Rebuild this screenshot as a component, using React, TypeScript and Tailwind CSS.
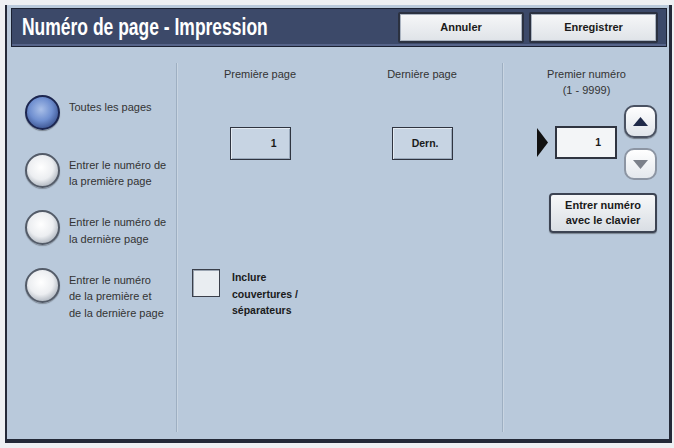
import React from 'react'

const sans = "font-['Liberation_Sans',Arial,sans-serif]"

function Radio({ selected }: { selected?: boolean }) {
    // round button: blue when chosen, pale grey otherwise
    return selected ? (
        <div className="w-[35px] h-[35px] shrink-0 rounded-full border-2 border-[#1c2650] bg-[radial-gradient(circle_at_45%_40%,#a9bfe8_0%,#6f8fd0_45%,#3a528f_80%,#233468_100%)] shadow-[0_1px_1px_rgba(0,0,0,0.35)]" />
    ) : (
        <div className="w-[35px] h-[35px] shrink-0 rounded-full border-2 border-[#535b68] bg-[radial-gradient(circle_at_45%_40%,#ffffff_0%,#eceef1_48%,#bcc2ca_72%,#767e8a_100%)] shadow-[0_1px_1px_rgba(0,0,0,0.3)]" />
    )
}

function HeaderButton({ label, width }: { label: string; width: string }) {
    return (
        <button
            className={`${width} h-[31px] rounded-[2px] border-2 border-[#2b3140] bg-gradient-to-b from-[#f6f7f8] to-[#dfe3e8] shadow-[inset_0_0_0_1px_#aab3c0] text-[11px] font-bold text-[#1a1a1a] ${sans}`}
        >
            {label}
        </button>
    )
}

function OptionRow({ selected, lines }: { selected?: boolean; lines: string[] }) {
    return (
        <div className="flex items-start h-[57.5px]">
            <Radio selected={selected} />
            <div className="ml-[9px] mt-[4px] text-[11px] leading-[16.5px] text-[#333]">
                {lines.map((l) => (
                    <div key={l}>{l}</div>
                ))}
            </div>
        </div>
    )
}

function Divider() {
    return <div className="w-[2px] shrink-0 mt-[16px] mb-[7px] border-l border-[#9eafc2] bg-[#c9d5e2]" />
}

function ValueBox({ value }: { value: string }) {
    return (
        <div className="w-[61px] h-[33px] border border-[#2f3440] bg-[#c7d4e3] shadow-[inset_1px_1px_0_#e4ebf3,inset_-1px_-1px_0_#9aa9bb] flex items-center justify-end pr-[13px] text-[10.5px] font-bold text-[#1a1a1a]">
            {value}
        </div>
    )
}

export default function App() {
    return (
        <div className={`w-[674px] h-[448px] bg-[#eef0f3] pt-[5px] pl-[5px] ${sans}`}>
            <div className="w-[667px] h-[438px] flex flex-col bg-[#b9c9db] border-l-2 border-r-[3px] border-b-[4px] border-[#242938]">
                {/* title bar */}
                <div className="mt-[3px] ml-[4px] mr-[2px] h-[39px] shrink-0 flex items-center bg-[#3c4969] border border-[#1b2132] shadow-[inset_0_-2px_0_#56648a]">
                    <span className="ml-[10px] inline-block origin-left scale-x-[0.76] whitespace-nowrap text-[23px] font-bold text-white font-['Liberation_Sans_Narrow','Liberation_Sans',sans-serif]">
                        Numéro de page - Impression
                    </span>
                    <div className="ml-auto mr-[8px] flex gap-[5px]">
                        <HeaderButton label="Annuler" width="w-[126px]" />
                        <HeaderButton label="Enregistrer" width="w-[129px]" />
                    </div>
                </div>

                {/* body */}
                <div className="flex-1 flex">
                    {/* options */}
                    <div className="w-[169px] shrink-0 pt-[48px] pl-[18px]">
                        <OptionRow selected lines={['Toutes les pages']} />
                        <OptionRow lines={['Entrer le numéro de', 'la première page']} />
                        <OptionRow lines={['Entrer le numéro de', 'la dernière page']} />
                        <OptionRow lines={['Entrer le numéro', 'de la première et', 'de la dernière page']} />
                    </div>

                    <Divider />

                    {/* page range */}
                    <div className="w-[324px] shrink-0 pt-[19px] text-[11px] text-[#333]">
                        <div className="flex">
                            <div className="w-[164px] flex flex-col items-center">
                                <div className="leading-[16px]">Première page</div>
                                <div className="mt-[45px]">
                                    <ValueBox value="1" />
                                </div>
                            </div>
                            <div className="w-[160px] flex flex-col items-center">
                                <div className="leading-[16px]">Dernière page</div>
                                <div className="mt-[45px]">
                                    <ValueBox value="Dern." />
                                </div>
                            </div>
                        </div>
                        <div className="mt-[109px] ml-[14px] flex items-start">
                            <div className="w-[28px] h-[28px] shrink-0 border border-[#3a3f4a] bg-[#e9edf1] shadow-[inset_1px_1px_0_#9aa4b1]" />
                            <div className="ml-[12px] text-[10.5px] leading-[16.5px] font-bold text-[#1a1a1a]">
                                <div>Inclure</div>
                                <div>couvertures /</div>
                                <div>séparateurs</div>
                            </div>
                        </div>
                    </div>

                    <Divider />

                    {/* start number */}
                    <div className="flex-1 pt-[19px] text-[11px] text-[#333]">
                        <div className="text-center leading-[16px]">
                            <div>Premier numéro</div>
                            <div>(1 - 9999)</div>
                        </div>
                        <div className="mt-[7px] pl-[33px] flex items-center">
                            <svg width="11" height="29" viewBox="0 0 11 29">
                                <polygon points="0,0 11,14.5 0,29" fill="#111" />
                            </svg>
                            <div className="ml-[7px] w-[62px] h-[33px] border-2 border-[#2f3440] bg-[#f3f5f7] flex items-center justify-end pr-[14px] text-[10.5px] font-bold text-[#1a1a1a]">
                                1
                            </div>
                            <div className="ml-[7px] flex flex-col gap-[10px]">
                                <button className="w-[33px] h-[33px] rounded-[10px] border-2 border-[#4a5262] bg-gradient-to-b from-[#ffffff] to-[#dfe4ea] shadow-[0_1px_1px_rgba(0,0,0,0.4)] flex items-center justify-center">
                                    <svg width="15" height="9" viewBox="0 0 15 9">
                                        <polygon points="0,9 7.5,0 15,9" fill="#1e2948" />
                                    </svg>
                                </button>
                                <button className="w-[33px] h-[32px] rounded-[10px] border-2 border-[#8c95a3] bg-gradient-to-b from-[#ffffff] to-[#e4e8ed] flex items-center justify-center">
                                    <svg width="15" height="9" viewBox="0 0 15 9">
                                        <polygon points="0,0 15,0 7.5,9" fill="#7b808a" />
                                    </svg>
                                </button>
                            </div>
                        </div>
                        <button className="mt-[13px] ml-[45px] w-[108px] h-[40px] rounded-[4px] border-2 border-[#3c4352] bg-gradient-to-b from-[#f7f8f9] to-[#d9dee4] shadow-[0_1px_1px_rgba(0,0,0,0.35)] text-[11px] leading-[15px] font-bold text-[#1a1a1a]">
                            Entrer numéro
                            <br />
                            avec le clavier
                        </button>
                    </div>
                </div>
            </div>
        </div>
    )
}
